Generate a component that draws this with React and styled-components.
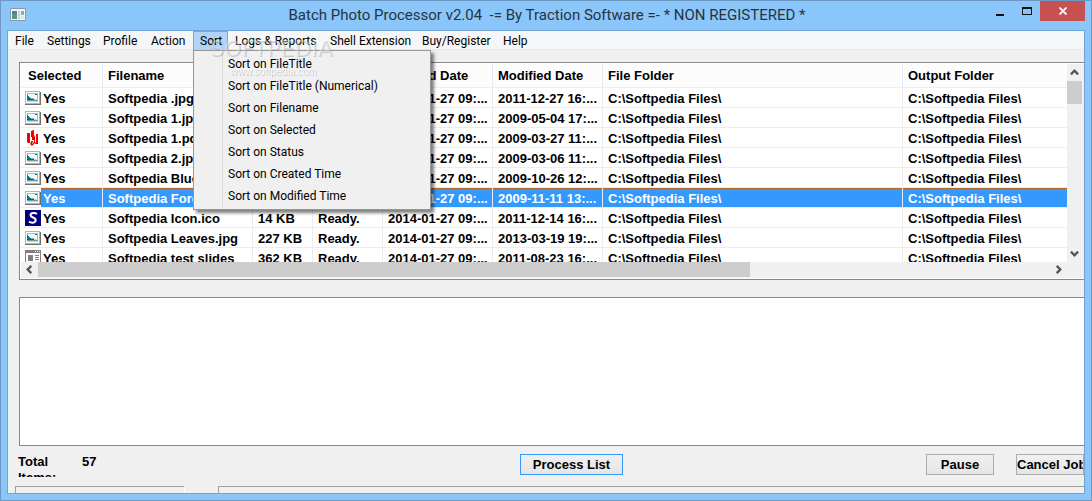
import React from "react";
import styled, { createGlobalStyle, css } from "styled-components";

const UI = 'Roboto, "Open Sans", sans-serif';
const SYS = '"Liberation Sans", Arial, sans-serif';

const Global = createGlobalStyle`
  *, *::before, *::after { box-sizing: border-box; }
  body { margin: 0; }
  button { font: inherit; color: inherit; margin: 0; padding: 0; border: 0; background: none; }
`;

const Window = styled.div`
  height: 100vh;
  min-height: 480px;
  display: flex;
  flex-direction: column;
  padding: 0 6px 6px;
  border: 1px solid #6c98c4;
  background: #8bc6fa;
  overflow: hidden;
  font-family: ${SYS};
  color: #000;
`;

const TitleBar = styled.header`
  flex: none;
  height: 29px;
  display: flex;
  align-items: flex-start;
  justify-content: space-between;
  padding-left: 3px;
`;

const AppIcon = styled.svg`
  display: block;
  margin-top: 7px;
`;

const Title = styled.h1`
  flex: 1;
  margin: 0 0 0 82px;
  text-align: center;
  font: 400 15px/28px ${UI};
  color: #26343f;
  white-space: pre;
`;

const WindowButtons = styled.div`
  display: flex;
`;

const WindowButton = styled.button`
  width: ${(p) => (p.$close ? 45 : 27)}px;
  height: 20px;
  display: flex;
  align-items: center;
  justify-content: center;
  background: ${(p) => (p.$close ? "#c75050" : "transparent")};
`;

const Client = styled.main`
  flex: 1;
  min-height: 0;
  display: flex;
  flex-direction: column;
  border: 1px solid #73a3d3;
  background: #f0f0f0;
  overflow: hidden;
  position: relative;
`;

const MenuBar = styled.nav`
  flex: none;
  display: grid;
  grid-template-columns: 32px 56px 48px 49px 35px 95px 92px 81px 40px;
  height: 19px;
  background: #f5f6f7;
  border-bottom: 1px solid #e8e8e8;
  font: 400 12px/18px ${UI};
`;

const MenuButton = styled.button`
  height: 20px;
  text-align: left;
  padding-left: 6px;
  white-space: nowrap;
  border: 1px solid ${(p) => (p.$open ? "#78a9dd" : "transparent")};
  background: ${(p) => (p.$open ? "#b0d3f8" : "transparent")};
`;

const MenuAnchor = styled.div`
  position: relative;
  display: grid;
`;

const DropDown = styled.div`
  position: absolute;
  z-index: 2;
  left: 0;
  top: 19px;
  width: 238px;
  padding: 2px;
  border: 1px solid #979797;
  background: #f0f0f0;
  box-shadow: 3px 3px 3px rgba(0, 0, 0, 0.5);
  display: grid;
`;

const MenuItem = styled.button`
  height: 22px;
  margin-left: 26px;
  padding-left: 5px;
  border-left: 1px solid #dcdcdc;
  text-align: left;
  font: 400 12px/22px ${UI};
  white-space: nowrap;
`;

const Watermark = styled.div`
  position: absolute;
  z-index: 3;
  left: 202px;
  top: 7px;
  pointer-events: none;
  text-align: center;
  color: rgba(255, 255, 255, 0.35);
  text-shadow: 1px 1px 0 rgba(130, 130, 130, 0.35);
  font: 400 22px/22px "DejaVu Sans", sans-serif;
`;

const WatermarkUrl = styled.div`
  padding: 6px 0 0 4px;
  font: 400 10px/12px ${SYS};
  color: rgba(255, 255, 255, 0.7);
`;

const FileList = styled.section`
  flex: none;
  margin: 12px 0 0 11px;
  padding: 1px 0 1px 1px;
  border: 1px solid #828790;
  border-right: 0;
  background: #fff;
  display: grid;
  grid-template-columns: 1fr 15px 2px;
  grid-template-rows: 198px 16px;
`;

const TableView = styled.div`
  overflow: hidden;
`;

const Table = styled.table`
  width: 100%;
  table-layout: fixed;
  border-collapse: separate;
  border-spacing: 0;
  font: 700 13px/21px ${SYS};
`;

const HeadCell = styled.th`
  height: 24px;
  padding: 0 0 0 ${(p) => (p.$first ? 7 : 5)}px;
  text-align: left;
  line-height: 23px;
  background: #fcfcfc;
  border-bottom: 1px solid #e5eff9;
  border-right: 1px solid #e0ebf6;
  white-space: nowrap;
  overflow: hidden;
  &:last-child { border-right: 0; }
`;

const selectedFill = css`
  background: #3399ff;
  color: #fff;
  border-top: 1px solid #b8651f;
  line-height: 19px;
`;

const Cell = styled.td`
  height: 20px;
  padding: 0;
  border-right: 1px solid #ececec;
  border-bottom: 1px solid #ececec;
  white-space: nowrap;
  overflow: hidden;
  &:last-child { border-right: 0; }
`;

const CellText = styled.div`
  flex: 1;
  height: 19px;
  padding-left: ${(p) => (p.$tight ? 2 : 5)}px;
  ${(p) => p.$selected && selectedFill}
`;

const IconCell = styled.div`
  display: flex;
  height: 19px;
  padding-left: 4px;
`;

const FileIcon = styled.svg`
  flex: none;
  display: block;
  margin-top: 2px;
`;

const VerticalBar = styled.div`
  display: flex;
  flex-direction: column;
  background: #f0f0f0;
`;

const HorizontalBar = styled.div`
  grid-column: 1;
  display: flex;
  background: #f0f0f0;
`;

const Corner = styled.div`
  grid-column: 2 / 4;
  background: #f0f0f0;
`;

const Edge = styled.div`
  background: #f0f0f0;
`;

const ArrowButton = styled.button`
  flex: none;
  width: ${(p) => (p.$wide ? 17 : 15)}px;
  height: ${(p) => (p.$wide ? 15 : 17)}px;
  display: flex;
  align-items: center;
  justify-content: center;
`;

const Track = styled.div`
  flex: 1;
`;

const Thumb = styled.div`
  background: #cdcdcd;
  height: ${(p) => (p.$vertical ? "23px" : "15px")};
  width: ${(p) => (p.$vertical ? "100%" : "calc(100% * 19 / 27)")};
`;

const LogBox = styled.textarea`
  flex: 1;
  min-height: 60px;
  margin: 17px 0 0 11px;
  padding: 4px;
  border: 1px solid #828790;
  border-right: 0;
  background: #fff;
  resize: none;
  outline: 0;
  font: 700 13px/18px ${SYS};
`;

const ActionBar = styled.footer`
  flex: none;
  height: 40px;
  display: flex;
  align-items: flex-start;
  padding: 8px 0 0 10px;
  font: 700 13px/16px ${SYS};
`;

const TotalLabel = styled.span`
  width: 64px;
  height: 23px;
  padding-right: 20px;
  overflow: hidden;
`;

const TotalValue = styled.span`
  width: 135px;
`;

const Spacer = styled.div`
  flex: 1;
`;

const PushButton = styled.button`
  flex: none;
  width: ${(p) => p.$width}px;
  height: 21px;
  border: 1px solid ${(p) => (p.$primary ? "#3399ff" : "#acacac")};
  background: linear-gradient(#f0f0f0, #e5e5e5);
  font: 700 13px/19px ${SYS};
  white-space: nowrap;
  overflow: hidden;
`;

const CancelSlot = styled.div`
  flex: none;
  width: 68px;
  margin-left: 22px;
  display: flex;
`;

const StatusBar = styled.div`
  flex: none;
  height: 7px;
  display: flex;
  gap: 33px;
  padding-left: 7px;
`;

const StatusPane = styled.div`
  flex: ${(p) => (p.$fill ? "1" : "0 0 170px")};
  border: 1px solid #a0a0a0;
  border-bottom: 0;
  border-right: ${(p) => (p.$fill ? "0" : "1px solid #fff")};
`;

function PhotoIcon() {
  return (
    <FileIcon width="16" height="16" viewBox="0 0 16 16" shapeRendering="crispEdges" aria-hidden="true">
      <path fill="#b4b4b4" d="M0 1h15v13H0z" />
      <path fill="#707070" d="M0 14h16v1H0zM15 2h1v13h-1z" />
      <path fill="#fff" d="M1 2h13v11H1z" />
      <path fill="#b0b8b8" d="M2 3h11v1H2zM2 4h1v4H2zM12 4h1v5h-1z" />
      <path fill="#f4fafa" d="M3 4h9v5H3z" />
      <path fill="#008080" d="M2 5h1v1h1v1h1v1h1v1H2zM10 4h2v1h-2z" />
      <path fill="#8ab8b8" d="M6 8h3v1H6z" />
      <path fill="#3c5050" d="M2 9h7v1H2z" />
      <path fill="#6f9c9c" d="M2 10h11v1H2z" />
      <path fill="#c8d4d4" d="M9 9h4v1H9zM2 11h11v1H2z" />
    </FileIcon>
  );
}

function PdfIcon() {
  return (
    <FileIcon width="16" height="16" viewBox="0 0 16 16" aria-hidden="true">
      <path fill="#f00000" d="M2 3h3v10H3l-1-1zM6 1l3-1v5l1 2v6l-3 3-2-2 1-2zM11 4h2v10h-3l1-3z" />
      <path fill="#fff" d="M6 7h1v3h2v1H6zM8 10h1v2l-2 2v-1l1-1z" />
    </FileIcon>
  );
}

function IcoIcon() {
  return (
    <FileIcon width="16" height="16" viewBox="0 0 16 16" aria-hidden="true">
      <path fill="#000080" d="M0 0h16v16H0z" />
      <path fill="none" stroke="#fff" strokeWidth="2" d="M12 4C10 2.500 5.500 2.500 5.500 5.300c0 2.600 5.500 1.900 5.200 5C10.500 13.300 6 13.200 4 11.500" />
    </FileIcon>
  );
}

function SlidesIcon() {
  return (
    <FileIcon width="16" height="16" viewBox="0 0 16 16" shapeRendering="crispEdges" aria-hidden="true">
      <path fill="#808080" d="M0 0h16v15H0z" />
      <path fill="#fff" d="M1 3h14v11H1zM10 1h1v1h-1zM12 1h1v1h-1zM14 1h1v1h-1z" />
      <path fill="#808080" d="M3 5h5v6H3zM10 5h4v1h-4zM10 7h4v1h-4zM10 9h4v1h-4z" />
    </FileIcon>
  );
}

const icons = { photo: PhotoIcon, pdf: PdfIcon, ico: IcoIcon, slides: SlidesIcon };

const chevrons = {
  up: "M1 7l4-4 4 4",
  down: "M1 3l4 4 4-4",
  left: "M7 1L3 5l4 4",
  right: "M3 1l4 4-4 4",
};

function Arrow({ dir, wide }) {
  return (
    <ArrowButton $wide={wide} aria-label={`Scroll ${dir}`}>
      <svg width="9" height="9" viewBox="0 0 10 10" aria-hidden="true">
        <path d={chevrons[dir]} fill="none" stroke="#555" strokeWidth="2.6" />
      </svg>
    </ArrowButton>
  );
}

const columns = [
  ["Selected", 82],
  ["Filename", 150],
  ["Size", 60],
  ["Status", 70],
  ["Created Date", 110],
  ["Modified Date", 110],
  ["File Folder", 300],
  ["Output Folder"],
];

const files = [
  ["photo", "Softpedia .jpg", "84 KB", "2011-12-27 16:..."],
  ["photo", "Softpedia 1.jpg", "96 KB", "2009-05-04 17:..."],
  ["pdf", "Softpedia 1.pdf", "52 KB", "2009-03-27 11:..."],
  ["photo", "Softpedia 2.jpg", "71 KB", "2009-03-06 11:..."],
  ["photo", "Softpedia Blue.jpg", "65 KB", "2009-10-26 12:..."],
  ["photo", "Softpedia Forest.jpg", "88 KB", "2009-11-11 13:..."],
  ["ico", "Softpedia Icon.ico", "14 KB", "2011-12-14 16:..."],
  ["photo", "Softpedia Leaves.jpg", "227 KB", "2013-03-19 19:..."],
  ["slides", "Softpedia test slides", "362 KB", "2011-08-23 16:..."],
];
const selectedIndex = 5;

const menus = ["File", "Settings", "Profile", "Action", "Sort", "Logs & Reports", "Shell Extension", "Buy/Register", "Help"];
const sortItems = [
  "FileTitle",
  "FileTitle (Numerical)",
  "Filename",
  "Selected",
  "Status",
  "Created Time",
  "Modified Time",
];

function FileRow({ file, selected }) {
  const [kind, name, size, modified] = file;
  const Icon = icons[kind];
  const rest = [name, size, "Ready.", "2014-01-27 09:...", modified, "C:\\Softpedia Files\\", "C:\\Softpedia Files\\"];
  return (
    <tr>
      <Cell>
        <IconCell>
          <Icon />
          <CellText $tight $selected={selected}>Yes</CellText>
        </IconCell>
      </Cell>
      {rest.map((text, i) => (
        <Cell key={i}>
          <CellText $selected={selected}>{text}</CellText>
        </Cell>
      ))}
    </tr>
  );
}

export default function App() {
  return (
    <Window>
      <Global />
      <TitleBar>
        <AppIcon width="16" height="14" viewBox="0 0 16 14" aria-hidden="true">
          <path fill="#f4f4f4" stroke="#8d9aa5" d="M.5.5h15v12H.5z" />
          <path fill="#4e9a86" d="M2 3h5v8H2z" />
          <path fill="#4d7fae" d="M2 3h5v3H2z" />
          <path fill="#c9d3da" d="M8 3h2v8H8z" />
          <path fill="#7db79c" d="M11 3h3v4h-3z" />
          <path fill="#dfe5e8" d="M11 8h3v3h-3z" />
        </AppIcon>
        <Title>{"Batch Photo Processor v2.04  -= By Traction Software =- * NON REGISTERED *"}</Title>
        <WindowButtons>
          <WindowButton aria-label="Minimize">
            <svg width="10" height="10" viewBox="0 0 10 10"><path fill="#111" d="M1 8h8v2H1z" /></svg>
          </WindowButton>
          <WindowButton aria-label="Maximize">
            <svg width="10" height="8" viewBox="0 0 10 8"><path fill="#111" fillRule="evenodd" d="M0 0h10v8H0zM1 2v5h8V2z" /></svg>
          </WindowButton>
          <WindowButton $close aria-label="Close">
            <svg width="8" height="8" viewBox="0 0 8 8"><path stroke="#fff" strokeWidth="1.8" d="M0.500 0.500l7 7M7.500 0.500l-7 7" /></svg>
          </WindowButton>
        </WindowButtons>
      </TitleBar>

      <Client>
        <MenuBar>
          {menus.map((name) =>
            name === "Sort" ? (
              <MenuAnchor key={name}>
                <MenuButton $open aria-expanded="true">{name}</MenuButton>
                <DropDown role="menu">
                  {sortItems.map((item) => (
                    <MenuItem key={item} role="menuitem">Sort on {item}</MenuItem>
                  ))}
                </DropDown>
              </MenuAnchor>
            ) : (
              <MenuButton key={name}>{name}</MenuButton>
            )
          )}
        </MenuBar>
        <Watermark aria-hidden="true">
          SOFTPEDIA
          <WatermarkUrl>www.softpedia.com</WatermarkUrl>
        </Watermark>

        <FileList>
          <TableView>
            <Table>
              <colgroup>
                {columns.map(([name, width]) => (
                  <col key={name} width={width} />
                ))}
              </colgroup>
              <thead>
                <tr>
                  {columns.map(([name], i) => (
                    <HeadCell key={name} $first={i === 0}>{name}</HeadCell>
                  ))}
                </tr>
              </thead>
              <tbody>
                {files.map((file, i) => (
                  <FileRow key={file[1]} file={file} selected={i === selectedIndex} />
                ))}
              </tbody>
            </Table>
          </TableView>
          <VerticalBar>
            <Arrow dir="up" />
            <Track><Thumb $vertical /></Track>
            <Arrow dir="down" />
          </VerticalBar>
          <Edge />
          <HorizontalBar>
            <Arrow dir="left" wide />
            <Track><Thumb /></Track>
            <Arrow dir="right" wide />
          </HorizontalBar>
          <Corner />
        </FileList>

        <LogBox aria-label="Log" readOnly />

        <ActionBar>
          <TotalLabel>Total Items:</TotalLabel>
          <TotalValue>57</TotalValue>
          <Spacer />
          <PushButton $primary $width={103}>Process List</PushButton>
          <Spacer />
          <PushButton $width={68}>Pause</PushButton>
          <CancelSlot>
            <PushButton $width={68}>Cancel Job</PushButton>
          </CancelSlot>
        </ActionBar>
        <StatusBar>
          <StatusPane />
          <StatusPane $fill />
        </StatusBar>
      </Client>
    </Window>
  );
}
